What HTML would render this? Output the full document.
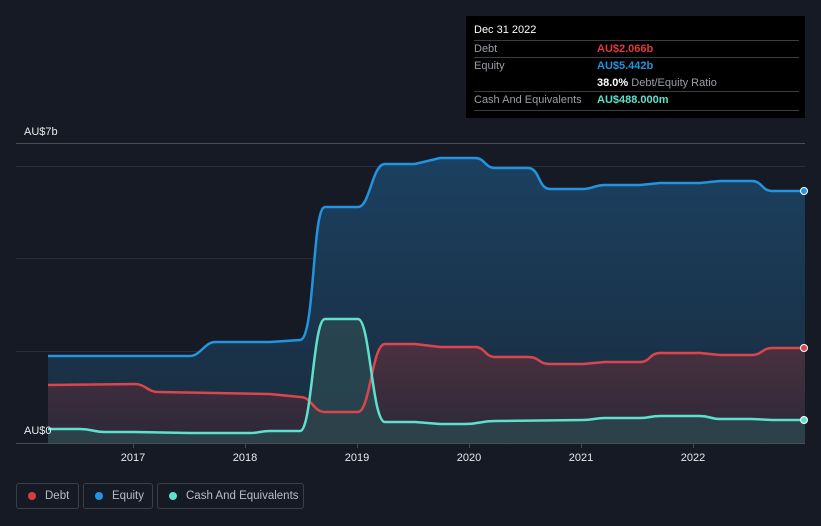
<!DOCTYPE html><html><head><style>
body{margin:0;background:#151a24;width:821px;height:526px;overflow:hidden;font-family:"Liberation Sans",sans-serif}
.tt{position:absolute;left:466px;top:16px;width:339px;height:102px;background:#000;}
.tt div{position:absolute;font-size:11px;white-space:nowrap}
.ln{position:absolute;left:8px;width:325px;height:1px;background:#3a3d44}
.lg{position:absolute;top:483px;height:26px;border:1px solid #3a3f4a;border-radius:3px;color:#b8bcc4;font-size:11.5px;line-height:24px;box-sizing:border-box;white-space:nowrap}
.lg i{position:absolute;left:11px;top:8px;width:8px;height:8px;border-radius:50%}
</style></head><body>
<svg width="821" height="526" style="position:absolute;left:0;top:0">
<defs>
<linearGradient id="ge" x1="0" y1="0" x2="0" y2="1"><stop offset="0" stop-color="#1b4060"/><stop offset="1" stop-color="#1a2c3e"/></linearGradient>
<linearGradient id="gd" x1="0" y1="0" x2="0" y2="1"><stop offset="0" stop-color="#4a3140"/><stop offset="1" stop-color="#2b2838"/></linearGradient>
</defs>
<line x1="16" y1="143.5" x2="805" y2="143.5" stroke="#4a4d55"/>
<line x1="16" y1="166.5" x2="805" y2="166.5" stroke="#2a2e37"/>
<line x1="16" y1="258.5" x2="805" y2="258.5" stroke="#2a2e37"/>
<line x1="16" y1="351.5" x2="805" y2="351.5" stroke="#2a2e37"/>
<path fill="url(#ge)" d="M48,356 L190,356 C200,356 205,342 215,342 L270,342 L300,340 C315,340 312,207 325,207 L358,207 C370,207 372,164 385,164 L415,164 L440,158 L475,158 C485,158 485,168 495,168 L528,168 C540,168 538,189 550,189 L583,189 C592,189 595,185 605,185 L640,185 L660,183 L700,183 L720,181 L752,181 C762,181 762,191 772,191 L805,191 L805,443 L48,443Z"/>
<path fill="url(#gd)" d="M48,385 L135,384 C145,384 148,392 158,392 L215,393 L270,394 L300,397 C312,397 313,412 325,412 L358,412 C370,412 372,344 385,344 L415,344 L440,347 L475,347 C485,347 485,357 495,357 L528,357 C540,357 538,364 550,364 L583,364 L605,362 L640,362 C650,362 650,353 660,353 L700,353 L720,355 L752,355 C762,355 762,348 772,348 L805,348 L805,443 L48,443Z"/>
<path fill="#2c4a50" opacity=".75" d="M48,429 L80,429 C92,429 93,432 105,432 L135,432 L190,433 L250,433 C260,433 260,431 270,431 L300,431 C312,431 313,319 325,319 L358,319 C370,319 372,422 385,422 L415,422 L440,424 L465,424 C480,424 480,421 495,421 L583,420 C593,420 595,418 605,418 L640,418 C650,418 650,416 660,416 L700,416 C710,416 710,419 720,419 L752,419 L772,420 L805,420 L805,443 L48,443Z"/>
<g fill="none" stroke-width="2.5">
<path stroke="#2394df" d="M48,356 L190,356 C200,356 205,342 215,342 L270,342 L300,340 C315,340 312,207 325,207 L358,207 C370,207 372,164 385,164 L415,164 L440,158 L475,158 C485,158 485,168 495,168 L528,168 C540,168 538,189 550,189 L583,189 C592,189 595,185 605,185 L640,185 L660,183 L700,183 L720,181 L752,181 C762,181 762,191 772,191 L805,191"/>
<path stroke="#d9464e" d="M48,385 L135,384 C145,384 148,392 158,392 L215,393 L270,394 L300,397 C312,397 313,412 325,412 L358,412 C370,412 372,344 385,344 L415,344 L440,347 L475,347 C485,347 485,357 495,357 L528,357 C540,357 538,364 550,364 L583,364 L605,362 L640,362 C650,362 650,353 660,353 L700,353 L720,355 L752,355 C762,355 762,348 772,348 L805,348"/>
<path stroke="#5ee0cc" d="M48,429 L80,429 C92,429 93,432 105,432 L135,432 L190,433 L250,433 C260,433 260,431 270,431 L300,431 C312,431 313,319 325,319 L358,319 C370,319 372,422 385,422 L415,422 L440,424 L465,424 C480,424 480,421 495,421 L583,420 C593,420 595,418 605,418 L640,418 C650,418 650,416 660,416 L700,416 C710,416 710,419 720,419 L752,419 L772,420 L805,420"/>
</g>
<circle cx="804" cy="191" r="3.5" fill="#2394df" stroke="#fff" stroke-width="1"/>
<circle cx="804" cy="348" r="3.5" fill="#d9464e" stroke="#fff" stroke-width="1"/>
<circle cx="804" cy="420" r="3.5" fill="#5ee0cc" stroke="#fff" stroke-width="1"/>
<line x1="16" y1="443.5" x2="805" y2="443.5" stroke="#4a4d55"/>
<g stroke="#4a4d55"><line x1="133.5" y1="443" x2="133.5" y2="448"/><line x1="245.5" y1="443" x2="245.5" y2="448"/><line x1="357.5" y1="443" x2="357.5" y2="448"/><line x1="469.5" y1="443" x2="469.5" y2="448"/><line x1="581.5" y1="443" x2="581.5" y2="448"/><line x1="693.5" y1="443" x2="693.5" y2="448"/></g>
<g fill="#e8eaee" font-size="11" font-family="Liberation Sans" text-anchor="middle">
<text x="133" y="461">2017</text><text x="245" y="461">2018</text><text x="357" y="461">2019</text><text x="469" y="461">2020</text><text x="581" y="461">2021</text><text x="693" y="461">2022</text>
<text x="24" y="135" text-anchor="start">AU$7b</text><text x="24" y="434" text-anchor="start">AU$0</text>
</g>
</svg>
<div class="tt">
<div style="left:8px;top:8px;color:#fff">Dec 31 2022</div>
<div class="ln" style="top:24px"></div>
<div style="left:8px;top:27px;color:#9a9ea6">Debt</div><div style="left:131px;top:27px;color:#e0393f;font-weight:bold">AU$2.066b</div>
<div class="ln" style="top:41px"></div>
<div style="left:8px;top:44px;color:#9a9ea6">Equity</div><div style="left:131px;top:44px;color:#2394df;font-weight:bold">AU$5.442b</div>
<div style="left:131px;top:61px;color:#9a9ea6"><b style="color:#fff">38.0%</b> Debt/Equity Ratio</div>
<div class="ln" style="top:75px"></div>
<div style="left:8px;top:78px;color:#9a9ea6">Cash And Equivalents</div><div style="left:131px;top:78px;color:#5ee0cc;font-weight:bold">AU$488.000m</div>
<div class="ln" style="top:94px"></div>
</div>
<div class="lg" style="left:16px;width:63px"><i style="background:#e0393f"></i><span style="margin-left:28px">Debt</span></div>
<div class="lg" style="left:83px;width:70px"><i style="background:#2394df"></i><span style="margin-left:28px">Equity</span></div>
<div class="lg" style="left:157px;width:147px"><i style="background:#5ee0cc"></i><span style="margin-left:28px">Cash And Equivalents</span></div>
</body></html>
